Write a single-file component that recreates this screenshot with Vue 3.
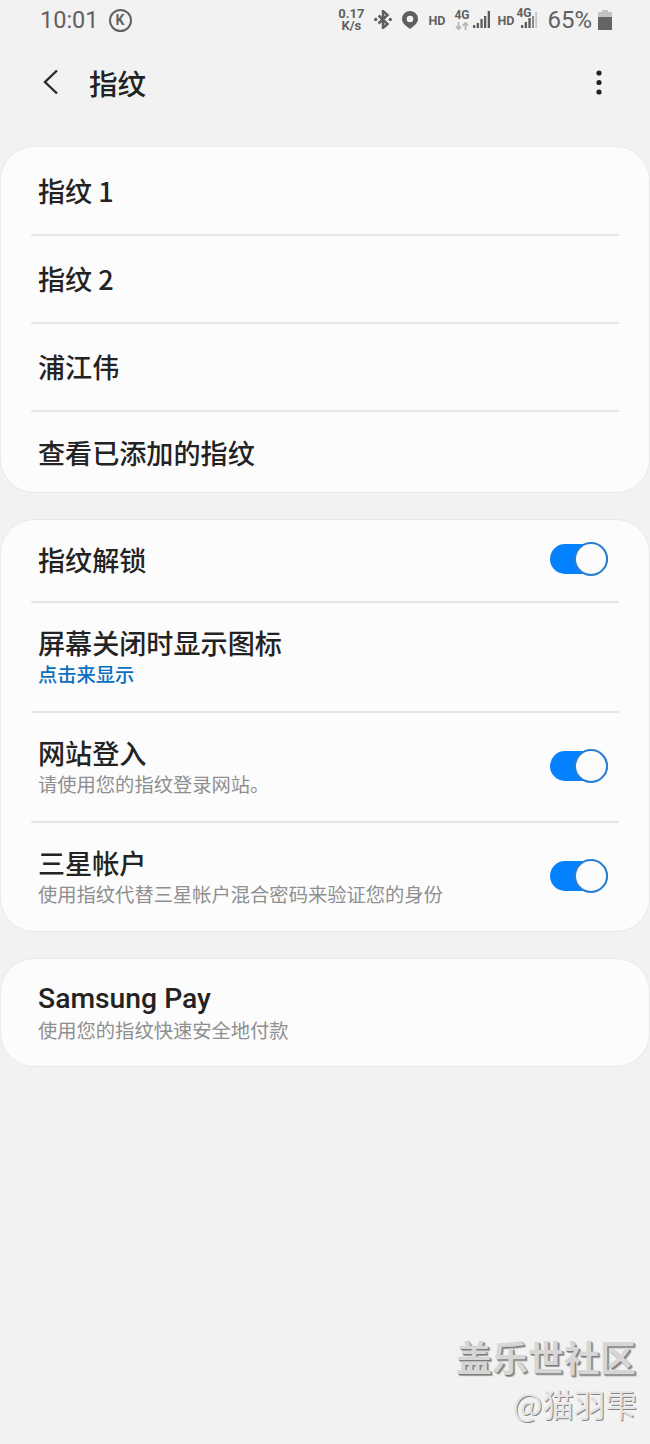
<template>
  <div class="screen">
    <div class="statusbar">
      <div class="sb-left">
        <span class="time">10:01</span>
        <span class="k-badge">K</span>
      </div>
      <div class="sb-right">
        <span class="speed">0.17<br />K/s</span>
        <svg class="bt" width="18" height="19" viewBox="0 0 18 19">
          <path d="M4.500 5.500L13.500 14 9 18V1l4.500 4-9 8.500" fill="none" stroke="#5f5f5f" stroke-width="2.500" />
          <circle cx="1.700" cy="9.500" r="1.700" fill="#5f5f5f" />
          <circle cx="16.300" cy="9.500" r="1.700" fill="#5f5f5f" />
        </svg>
        <svg class="pin" width="16" height="18" viewBox="0 0 16 18">
          <path fill-rule="evenodd" d="M8 0a8 8 0 0 1 8 8c0 4-4 7-8 10C4 15 0 12 0 8a8 8 0 0 1 8-8zm0 4.700a3.300 3.300 0 1 0 0 6.600 3.300 3.300 0 0 0 0-6.600z" fill="#5f5f5f" />
        </svg>
        <span class="hd hd1">HD</span>
        <span class="net">
          <span>4G</span>
          <svg width="14" height="8" viewBox="0 0 14 8">
            <path d="M3.500 0v7M1 4.500l2.500 2.500L6 4.500" fill="none" stroke="#b5b5b5" stroke-width="1.800" />
            <path d="M10.500 8V1M8 3.500L10.500 1 13 3.500" fill="none" stroke="#b5b5b5" stroke-width="1.800" />
          </svg>
        </span>
        <svg class="signal" width="17" height="17" viewBox="0 0 17 17">
          <path d="M0 14h2.300v3H0zM3.700 12H6v5H3.700zM7.400 8h2.300v9H7.400zM11 5h2.300v12H11zM14.700 0H17v17h-2.300z" fill="#5a5a5a" />
        </svg>
        <span class="hd hd2">HD</span>
        <span class="sim2">
          <span class="net2">4G</span>
          <svg width="17" height="17" viewBox="0 0 17 17">
            <path d="M1 14h2.300v3H1zM4.700 11H7v6H4.700zM8.400 7h2.300v10H8.400z" fill="#5a5a5a" />
            <path d="M12 5h2v12h-2z" fill="#8a8a8a" />
            <path d="M15.300 1H17v16h-1.700z" fill="#c4c4c4" />
          </svg>
        </span>
        <span class="pct">65%</span>
        <svg class="batt" width="14" height="20" viewBox="0 0 14 20">
          <path d="M4 0h6v2h4v5H0V2h4z" fill="#c4c4c4" />
          <path d="M0 7h14v13H0z" fill="#646464" />
        </svg>
      </div>
    </div>

    <div class="toolbar">
      <svg class="back" width="18" height="26" viewBox="0 0 18 26">
        <path d="M15 1.500L3 13l12 11.500" fill="none" stroke="#2a2a2a" stroke-width="2.400" />
      </svg>
      <h1 class="title">指纹</h1>
      <svg class="more" width="8" height="26" viewBox="0 0 8 26">
        <circle cx="4" cy="4" r="2.600" fill="#222" />
        <circle cx="4" cy="13.500" r="2.600" fill="#222" />
        <circle cx="4" cy="23" r="2.600" fill="#222" />
      </svg>
    </div>

    <section class="card first">
      <div v-for="r in fingerprints" :key="r.label" class="row" :class="r.cls">
        <span class="label">{{ r.label }}</span>
      </div>
    </section>

    <section class="card">
      <div v-for="r in options" :key="r.label" class="row" :class="r.cls">
        <div class="texts">
          <span class="label">{{ r.label }}</span>
          <span v-if="r.sub" class="sub" :class="{ link: r.link }">{{ r.sub }}</span>
        </div>
        <span v-if="r.toggle" class="switch"><span class="knob"></span></span>
      </div>
    </section>

    <section class="card">
      <div class="row r-pay">
        <div class="texts">
          <span class="label latin">Samsung Pay</span>
          <span class="sub">使用您的指纹快速安全地付款</span>
        </div>
      </div>
    </section>

    <div class="watermark">
      <div class="wm-main">盖乐世社区</div>
      <div class="wm-user">@猫羽雫</div>
    </div>
  </div>
</template>

<script setup>
const fingerprints = [
  { label: "指纹 1", cls: "r-a" },
  { label: "指纹 2", cls: "r-b" },
  { label: "浦江伟", cls: "r-b" },
  { label: "查看已添加的指纹", cls: "r-c" },
];

const options = [
  { label: "指纹解锁", toggle: true, cls: "r-d" },
  { label: "屏幕关闭时显示图标", sub: "点击来显示", link: true, cls: "r-e" },
  { label: "网站登入", sub: "请使用您的指纹登录网站。", toggle: true, cls: "r-e" },
  { label: "三星帐户", sub: "使用指纹代替三星帐户混合密码来验证您的身份", toggle: true, cls: "r-f" },
];
</script>

<style>
html, body { background: #f2f2f2; }
</style>

<style scoped>
.screen {
  position: relative;
  width: 650px;
  height: 1444px;
  overflow: hidden;
  background: #f2f2f2;
  font-family: "Noto Sans CJK SC", "Noto Sans", sans-serif;
  color: #222;
}

.statusbar {
  height: 40px;
  padding: 0 38px 0 40px;
  display: flex;
  align-items: center;
  justify-content: space-between;
  color: #616161;
}
.sb-left { display: flex; align-items: center; gap: 10px; }
.time { font: 23.5px/40px Roboto, sans-serif; }
.k-badge {
  width: 23px;
  height: 23px;
  box-sizing: border-box;
  border: 2.5px solid #616161;
  border-radius: 50%;
  display: flex;
  align-items: center;
  justify-content: center;
  font: 700 14px/1 Roboto, sans-serif;
}
.sb-right { display: flex; align-items: center; font-family: Roboto, sans-serif; }
.speed {
  display: block;
  text-align: center;
  font-size: 13px;
  font-weight: 700;
  line-height: 12px;
}
.bt { margin-left: 10px; margin-top: -1px; }
.pin { margin-left: 10px; margin-top: -1px; }
.hd { font-size: 12.5px; font-weight: 700; }
.hd1 { margin-left: 10px; }
.net {
  margin-left: 9px;
  display: flex;
  flex-direction: column;
  align-items: center;
  font-size: 12px;
  font-weight: 700;
  line-height: 11px;
}
.net svg { display: block; margin-top: 1px; }
.signal { margin-left: 4px; margin-top: -1px; }
.hd2 { margin-left: 7px; }
.sim2 { position: relative; margin-left: 2px; margin-top: -2px; width: 23px; height: 20px; display: flex; align-items: flex-end; justify-content: flex-end; }
.sim2 svg { margin: 0 2px 1px 0; }
.net2 { position: absolute; left: 0; top: 0; font-size: 12px; font-weight: 700; line-height: 9px; }
.pct { margin-left: 8px; font-size: 24px; line-height: 30px; }
.batt { margin-left: 6px; }

.toolbar {
  height: 84px;
  padding: 0 47px 0 42px;
  display: flex;
  align-items: center;
}
.title {
  margin: 2px 0 0 29px;
  flex: 1;
  font-size: 28.500px;
  font-weight: 500;
  line-height: 40px;
  color: #222;
}

.card {
  margin-top: 26px;
  background: #fcfcfc;
  border: 1px solid #e9e9e9;
  box-sizing: border-box;
  border-radius: 34px;
  overflow: hidden;
}
.card.first { margin-top: 22px; }

.row {
  box-sizing: border-box;
  margin: 0 30px;
  padding: 0 11px 0 7px;
  display: flex;
  align-items: center;
  justify-content: space-between;
  border-bottom: 2px solid #e6e6e6;
}
.row:last-child { border-bottom: none; }
.r-a { height: 89px; }
.r-b { height: 88px; }
.r-c { height: 80px; padding-top: 2px; }
.r-d { height: 83px; padding-bottom: 2px; }
.r-e { height: 110px; padding-bottom: 2px; }
.r-f { height: 108px; padding-bottom: 1px; }
.r-pay { height: 107px; }

.texts { display: flex; flex-direction: column; }
.label {
  font-size: 27.100px;
  font-weight: 500;
  line-height: 36px;
  color: #232323;
}
.label.latin { font-family: Roboto, sans-serif; font-size: 28.300px; font-weight: 500; }
.sub {
  font-size: 19.300px;
  line-height: 27px;
  color: #8f8f8f;
}
.sub.link { color: #0a6fc0; font-weight: 500; }

.switch {
  position: relative;
  display: block;
  width: 58px;
  height: 30px;
  margin-bottom: 1px;
  border-radius: 15px;
  background: #0381fe;
}
.knob {
  position: absolute;
  right: 0;
  top: -2px;
  box-sizing: border-box;
  width: 34px;
  height: 34px;
  border-radius: 50%;
  background: #fcfcfc;
  border: 2px solid #2b7fd0;
}

.watermark {
  position: absolute;
  right: 14px;
  top: 1333px;
  text-align: right;
  pointer-events: none;
}
.wm-main {
  font-size: 36px;
  line-height: 46px;
  font-weight: 700;
  color: #d6d6d6;
  text-shadow: 1px 1px 0 #7c7c7c, 2px 2px 1px #9a9a9a;
}
.wm-user {
  margin-top: 6px;
  margin-right: -1px;
  font-size: 31.500px;
  line-height: 36px;
  color: #e4e4e4;
  text-shadow: 1px 1px 0 #858585;
}
</style>
